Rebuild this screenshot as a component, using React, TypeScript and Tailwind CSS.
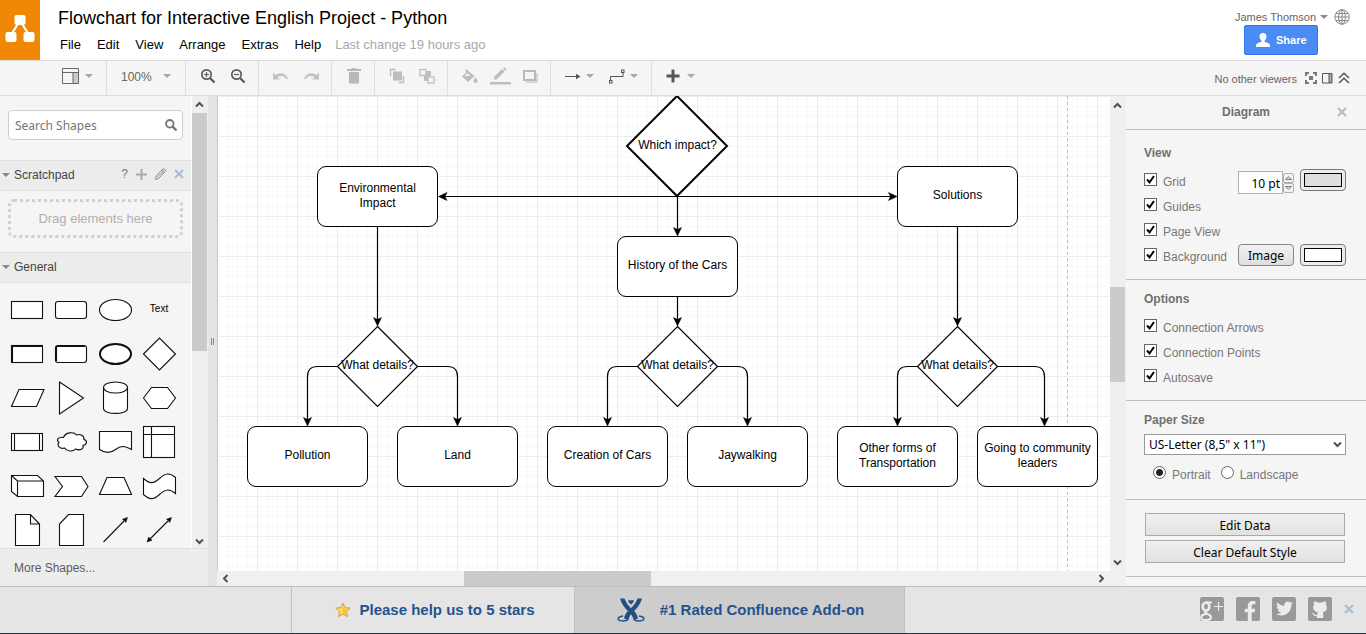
import React, { ReactNode } from "react";
import { FaFacebookF, FaTwitter } from "react-icons/fa";

const ARIAL = "font-['Liberation_Sans',Arial,sans-serif]";
const TAHOMA = "font-['Noto_Sans',Tahoma,sans-serif]";

/* ---------- small shared pieces ---------- */

function Caret({ className = "text-[#a8a8a8]" }: { className?: string }) {
  return (
    <svg width="8" height="4" viewBox="0 0 8 4" className={className} aria-hidden="true">
      <path d="M0 0h8L4 4z" fill="currentColor" />
    </svg>
  );
}

function Cross() {
  return (
    <svg width="10" height="10" viewBox="0 0 10 10" aria-hidden="true">
      <path d="M1 1l8 8M9 1l-8 8" stroke="#a9bcd0" strokeWidth="2" fill="none" />
    </svg>
  );
}

function Chevron({ d }: { d: string }) {
  return (
    <svg width="9" height="9" viewBox="0 0 9 9" aria-hidden="true">
      <path d={d} stroke="#505050" strokeWidth="2" fill="none" />
    </svg>
  );
}

const UP = "M1 6.5l3.5-3.5L8 6.5";
const DOWN = "M1 2.5L4.5 6L8 2.5";
const LEFT = "M6.5 1L3 4.5L6.5 8";
const RIGHT = "M2.5 1L6 4.5L2.5 8";

/* ---------- header ---------- */

function Header() {
  return (
    <header className="flex h-[60px] shrink-0 bg-white">
      <div className="h-[60px] w-10 shrink-0 bg-[#f08705]">
        <svg width="40" height="60" viewBox="0 0 40 60" aria-label="Logo">
          <path d="M19 22L11 35M21 22l8 13" stroke="#fff" strokeWidth="2.2" />
          <rect x="14.5" y="15" width="11" height="10" rx="2" fill="#fff" />
          <rect x="5.5" y="32" width="11" height="10" rx="2" fill="#fff" />
          <rect x="23.5" y="32" width="11" height="10" rx="2" fill="#fff" />
        </svg>
      </div>
      <div className="min-w-0 flex-1 pl-[18px] pt-[7px]">
        <h1 className="text-[18px] leading-[22px] text-black">
          Flowchart for Interactive English Project - Python
        </h1>
        <nav className="mt-2 flex gap-4 pl-0.5 text-[13px] leading-4 text-black">
          {["File", "Edit", "View", "Arrange", "Extras", "Help"].map((m) => (
            <button key={m} type="button">
              {m}
            </button>
          ))}
          <span className="-ml-0.5 text-[#a9a9a9]">Last change 19 hours ago</span>
        </nav>
      </div>
      <div className="flex flex-col pr-4 pt-2">
        <div className="flex items-center">
          <button type="button" className="flex items-center gap-1 pt-px text-[11px] leading-4 text-[#666]">
            James Thomson
            <Caret className="text-[#8a8a8a]" />
          </button>
          <a href="#language" aria-label="Language" className="ml-1.5 block">
            <svg width="16" height="16" viewBox="0 0 16 16" fill="none" stroke="#888" aria-hidden="true">
              <circle cx="8" cy="8" r="7.2" />
              <ellipse cx="8" cy="8" rx="3.4" ry="7.2" />
              <path d="M8 1v14M1 8h14M2 4.5h12M2 11.5h12" />
            </svg>
          </a>
        </div>
        <button
          type="button"
          className="mr-8 flex h-[30px] w-[74px] items-center gap-1.5 self-end rounded-[2px] border border-[#3079ed] bg-[#4a8bf5] pl-[11px] text-[11px] font-bold text-white"
        >
          <svg width="14" height="14" viewBox="0 0 14 14" fill="#fff" aria-hidden="true">
            <path d="M7 0c2.200 0 3.500 1.500 3.500 3.500 0 1.700-.8 3.300-1.900 4v1.200c1.700.7 4.400 1.200 5.100 2.800.3.700.3 2.500.3 2.500H0s0-1.800.3-2.500C1 9.900 3.700 9.400 5.400 8.700V7.500C4.300 6.800 3.500 5.200 3.500 3.500 3.500 1.500 4.800 0 7 0z" />
          </svg>
          Share
        </button>
      </div>
    </header>
  );
}

/* ---------- toolbar ---------- */

function Group({ children, className }: { children: ReactNode; className: string }) {
  return <div className={`flex h-full shrink-0 items-center pb-1 ${className}`}>{children}</div>;
}

function Tool({ label, children }: { label: string; children: ReactNode }) {
  return (
    <button type="button" aria-label={label} className="flex items-center gap-[5px]">
      {children}
    </button>
  );
}

function Zoom({ plus }: { plus?: boolean }) {
  return (
    <svg width="16" height="16" viewBox="0 0 16 16" fill="none" stroke="#5c5c5c" aria-hidden="true">
      <circle cx="6.500" cy="6.500" r="4.700" strokeWidth="1.700" />
      <path d="M10 10l4.500 4.500" strokeWidth="2.300" />
      <path d={plus ? "M4 6.500h5M6.500 4v5" : "M4 6.500h5"} strokeWidth="1.200" />
    </svg>
  );
}

function Toolbar() {
  const sep = "border-r border-[#dedede]";
  return (
    <div className="flex h-[36px] shrink-0 border-y border-t-[#dadada] border-b-[#dcdcdc] bg-[#f5f5f5]">
      <Group className={`w-[107px] pl-[62px] ${sep}`}>
        <Tool label="View panels">
          <svg width="18" height="17" viewBox="0 0 18 17" fill="none" stroke="#666" aria-hidden="true">
            <rect x="11" y="5" width="6" height="11" fill="#ccc" stroke="none" />
            <path d="M.5.500h16v15H.500zM.500 4.500h16M11 4.500v11" />
          </svg>
          <Caret />
        </Tool>
      </Group>
      <Group className={`w-[79px] pl-[14px] ${sep}`}>
        <button type="button" className="flex items-center gap-[11px] text-[12px] leading-4 text-[#666]">
          <span className="pt-0.5">100%</span>
          <Caret />
        </button>
      </Group>
      <Group className={`w-[73px] gap-3.5 pl-[14px] ${sep}`}>
        <Tool label="Zoom in"><Zoom plus /></Tool>
        <Tool label="Zoom out"><Zoom /></Tool>
      </Group>
      <Group className={`w-[73px] gap-3.5 pl-[14px] ${sep}`}>
        <Tool label="Undo">
          <svg width="16" height="10" viewBox="0 0 16 10" fill="#c4c4c4" aria-hidden="true">
            <path d="M0 1.500v7h7L4.600 6.200C7.500 4 11 4.500 13.300 8.200L15 7.500C12.800 2 7 1 2.600 4z" />
          </svg>
        </Tool>
        <Tool label="Redo">
          <svg width="16" height="10" viewBox="0 0 16 10" fill="#c4c4c4" aria-hidden="true">
            <path d="M16 1.500v7H9l2.400-2.300C8.500 4 5 4.500 2.700 8.200L1 7.500C3.200 2 9 1 13.400 4z" />
          </svg>
        </Tool>
      </Group>
      <Group className={`w-[43px] pl-[15px] ${sep}`}>
        <Tool label="Delete">
          <svg width="14" height="16" viewBox="0 0 14 16" fill="#b9b9b9" aria-hidden="true">
            <path d="M0 1h4.500V0h5v1H14v2H0zM2 4h10v11.500H2z" />
          </svg>
        </Tool>
      </Group>
      <Group className={`w-[73px] gap-3.5 pl-[14px] ${sep}`}>
        <Tool label="To front">
          <svg width="16" height="16" viewBox="0 0 16 16" fill="none" stroke="#bdbdbd" aria-hidden="true">
            <path d="M6.500 1.500h-5v6h1M9.500 14.500h5v-6h-1" strokeWidth="1.300" />
            <rect x="4" y="3.500" width="9" height="9" fill="#bdbdbd" stroke="none" />
          </svg>
        </Tool>
        <Tool label="To back">
          <svg width="16" height="16" viewBox="0 0 16 16" fill="none" stroke="#bdbdbd" aria-hidden="true">
            <path d="M7 3h5v5h3v0H9v5H5V8h2z" fill="#bdbdbd" stroke="none" />
            <rect x="1" y="1.500" width="6" height="6" strokeWidth="1.300" />
            <rect x="9" y="9" width="6" height="6" strokeWidth="1.300" fill="#f5f5f5" />
          </svg>
        </Tool>
      </Group>
      <Group className={`w-[103px] gap-3 pl-[13px] ${sep}`}>
        <Tool label="Fill colour">
          <svg width="17" height="15" viewBox="0 0 17 15" fill="#bdbdbd" aria-hidden="true">
            <path d="M5 0l8.500 7-6.500 6L1 7.500 5.500 3 4 1.300z" />
            <path d="M3.500 7L6.500 4.300 9.500 7z" fill="#f5f5f5" />
            <path d="M14.500 8c1 1.800 2 2.800 2 4a2 2 0 01-4 0c0-1.200 1-2.200 2-4z" />
          </svg>
        </Tool>
        <Tool label="Line colour">
          <svg width="21" height="18" viewBox="0 0 21 18" fill="#bdbdbd" aria-hidden="true">
            <path d="M4 12.500V10L12 2l2.500 2.500-8 8zM13 1.200L14.200 0l2.500 2.500L15.500 3.700zM0 15h21v2.500H0z" />
          </svg>
        </Tool>
        <Tool label="Shadow">
          <svg width="15" height="13" viewBox="0 0 15 13" aria-hidden="true">
            <rect x="3" y="3" width="12" height="10" fill="#d6d6d6" />
            <rect x="1" y="1" width="11" height="9" fill="#f5f5f5" stroke="#b9b9b9" strokeWidth="2" />
          </svg>
        </Tool>
      </Group>
      <Group className={`w-[101px] gap-[15px] pl-[14px] ${sep}`}>
        <Tool label="Connection">
          <svg width="16" height="7" viewBox="0 0 16 7" aria-hidden="true">
            <path d="M0 3.500h13" stroke="#555" />
            <path d="M11 .8l4.500 2.700L11 6.200z" fill="#555" />
          </svg>
          <Caret />
        </Tool>
        <Tool label="Waypoints">
          <svg width="16" height="15" viewBox="0 0 16 15" fill="none" stroke="#555" aria-hidden="true">
            <path d="M1.500 11V7.500h12.500V4" />
            <rect x=".5" y="11.500" width="2.500" height="2.500" />
            <rect x="12.500" y="1" width="2.500" height="2.500" />
          </svg>
          <Caret />
        </Tool>
      </Group>
      <Group className="pl-[14px]">
        <Tool label="Insert">
          <svg width="14" height="14" viewBox="0 0 14 14" aria-hidden="true">
            <path d="M7 .5v13M.5 7h13" stroke="#555" strokeWidth="3" />
          </svg>
          <span className="pl-0.5"><Caret /></span>
        </Tool>
      </Group>
      <div className="ml-auto flex items-center gap-[5px] pr-4 text-[11px] text-[#666]">
        <span className="pr-[3px] pt-0.5">No other viewers</span>
        <Tool label="Full screen">
          <svg width="12" height="12" viewBox="0 0 12 12" fill="none" stroke="#777" strokeWidth="2" aria-hidden="true">
            <path d="M1 4V1h3M8 1h3v3M11 8v3H8M4 11H1V8" />
            <rect x="4" y="4" width="4" height="4" fill="#777" stroke="none" />
          </svg>
        </Tool>
        <Tool label="Format panel">
          <svg width="11" height="11" viewBox="0 0 11 11" aria-hidden="true">
            <rect x="7" y="1" width="3" height="9" fill="#aaa" />
            <path d="M.5.500h9.500v9.500H.500zM7 1v9" fill="none" stroke="#555" />
          </svg>
        </Tool>
        <Tool label="Collapse">
          <svg width="12" height="12" viewBox="0 0 12 12" fill="none" stroke="#555" strokeWidth="1.500" aria-hidden="true">
            <path d="M1 6l5-4.800L11 6M1 11l5-4.800L11 11" />
          </svg>
        </Tool>
      </div>
    </div>
  );
}

/* ---------- shapes sidebar ---------- */

const SHAPES: { name: string; art: ReactNode }[] = [
  { name: "Rectangle", art: <rect x="6.500" y="13.500" width="31" height="17" /> },
  { name: "Rounded rectangle", art: <rect x="6.500" y="13.500" width="31" height="17" rx="2.500" /> },
  { name: "Ellipse", art: <ellipse cx="22.500" cy="22" rx="16" ry="10.500" /> },
  { name: "Text", art: null },
  {
    name: "Bold rectangle",
    art: (
      <>
        <rect x="6.500" y="13.500" width="31" height="17" />
        <path d="M7.500 30V14.500H37" />
      </>
    ),
  },
  {
    name: "Bold rounded rectangle",
    art: (
      <>
        <rect x="6.500" y="13.500" width="31" height="17" rx="2.500" />
        <path d="M7.500 29V14.500H36" />
      </>
    ),
  },
  { name: "Bold ellipse", art: <ellipse cx="22.500" cy="22" rx="15.500" ry="10" strokeWidth="2" /> },
  { name: "Diamond", art: <path d="M6.500 22l16-16 16 16-16 16z" /> },
  { name: "Parallelogram", art: <path d="M6.500 30.500l7.500-17h25l-7.500 17z" /> },
  { name: "Triangle", art: <path d="M10.500 6l24 16-24 16z" /> },
  {
    name: "Cylinder",
    art: (
      <>
        <path d="M10.500 11.500v21c0 6.500 24 6.500 24 0v-21" />
        <ellipse cx="22.500" cy="11.500" rx="12" ry="5.500" />
      </>
    ),
  },
  { name: "Hexagon", art: <path d="M6.500 22l8-10.500h16l8 10.500-8 10.500h-16z" /> },
  {
    name: "Process",
    art: (
      <>
        <rect x="6.500" y="13.500" width="31" height="17" />
        <path d="M9.500 13.500v17M34.500 13.500v17" />
      </>
    ),
  },
  {
    name: "Cloud",
    art: (
      <path d="M14.500 17.500c-6-1-7.500 3-4.500 5-3 3 1.500 7 5.500 5.500 2 3.500 8.500 4 11 1 4.500 2 8.500 0 7.500-3.500 4.500-1 4.500-5 1-6 .5-4-4-6-7.500-4.500-2.500-3.500-11-3-13 2.500z" />
    ),
  },
  { name: "Document", art: <path d="M6.500 11.500h32v18c-7-4-11-4-16 0s-10 4-16 0z" /> },
  {
    name: "Internal storage",
    art: (
      <>
        <rect x="6.500" y="6.500" width="31" height="31" />
        <path d="M14.500 6.500v31M6.500 14.500h31" />
      </>
    ),
  },
  {
    name: "Cube",
    art: (
      <path d="M6.500 11.500h26l6 5.500v15.500h-26l-6-5zM6.500 11.500l6 5.500v15.500M12.500 17h26" />
    ),
  },
  { name: "Step", art: <path d="M6 12.500h26.500l6.500 10-6.500 10H6l7.500-10z" /> },
  { name: "Trapezoid", art: <path d="M6.500 30.500l7.500-17h17l7.500 17z" /> },
  {
    name: "Tape",
    art: <path d="M6.500 14.500c6 5.500 10 5.500 16 0s10-6 16-1v16c-6-5-10-4.500-16 1s-10 5.500-16 0z" />,
  },
  { name: "Note", art: <path d="M10.500 6.500h15l9 9.500v21.500h-24zM25.500 6.500V16h9" /> },
  { name: "Card", art: <path d="M19.500 6.500h15v31h-24V16z" /> },
  {
    name: "Arrow",
    art: (
      <>
        <path d="M10.500 34l21-21.500" />
        <path d="M34.500 9.500l-1.800 5-1.200-2-2-1.200z" fill="#000" strokeWidth=".6" />
      </>
    ),
  },
  {
    name: "Two-way arrow",
    art: (
      <>
        <path d="M12.500 31.500l19-19" />
        <path d="M34.500 9.500l-1.800 5-1.200-2-2-1.200zM10 34l1.800-5 1.200 2 2 1.200z" fill="#000" strokeWidth=".6" />
      </>
    ),
  },
];

function SectionHeader({ title, children }: { title: string; children?: ReactNode }) {
  return (
    <div className="flex h-[31px] items-center border-y border-[#e0e0e0] bg-[#ececec] pb-[3px] pl-0.5 pr-[7px]">
      <button type="button" className="flex items-center gap-1 pt-px text-[12px] leading-4 text-[#444]">
        <Caret className="text-[#888]" />
        {title}
      </button>
      <div className="ml-auto flex items-center gap-2">{children}</div>
    </div>
  );
}

function Sidebar() {
  return (
    <aside className="flex w-[208px] shrink-0 flex-col">
      <div className="flex min-h-0 flex-1">
        <div className="w-[192px] overflow-hidden border-r border-white bg-[#f5f5f5]">
          <div className="px-2 pb-5 pt-[14px]">
            <div className="flex h-[30px] w-[175px] items-center rounded-[4px] border border-[#cfcfcf] bg-white pl-1.5 pr-[5px]">
              <input
                type="text"
                aria-label="Search Shapes"
                placeholder="Search Shapes"
                className={`w-0 min-w-0 flex-1 bg-transparent pt-0.5 text-[12px] text-[#333] outline-none placeholder:text-[#757575] ${TAHOMA}`}
              />
              <svg width="12" height="12" viewBox="0 0 12 12" fill="none" stroke="#777" aria-hidden="true">
                <circle cx="4.800" cy="4.800" r="3.800" strokeWidth="1.800" />
                <path d="M7.500 7.500l4 4" strokeWidth="2.400" />
              </svg>
            </div>
          </div>
          <SectionHeader title="Scratchpad">
            <button type="button" aria-label="Help" className="text-[12px] leading-4 text-[#777]">?</button>
            <button type="button" aria-label="Add">
              <svg width="11" height="11" viewBox="0 0 11 11" aria-hidden="true">
                <path d="M5.500 0v11M0 5.500h11" stroke="#aaa" strokeWidth="2" />
              </svg>
            </button>
            <button type="button" aria-label="Edit">
              <svg width="11" height="12" viewBox="0 0 11 12" fill="none" stroke="#8a8a8a" aria-hidden="true">
                <path d="M.5 11.500l.8-3.800L8 1c1-1 3.200 1 2.300 2.200L3.800 10.300zM2.500 9L8.500 3M6.800 2.200l2.500 2.300" />
              </svg>
            </button>
            <button type="button" aria-label="Close scratchpad"><Cross /></button>
          </SectionHeader>
          <div className="px-2 py-2">
            <div className="mb-1.5 flex h-[39px] w-[175px] items-center justify-center rounded-[6px] border-[3px] border-dotted border-[#d0d0d0] text-[13px] text-[#b0b0b0]">
              Drag elements here
            </div>
          </div>
          <SectionHeader title="General" />
          <div className="grid grid-cols-[repeat(4,44px)] pl-[5px] pt-[5px]">
            {SHAPES.map((s) => (
              <button key={s.name} type="button" aria-label={s.name} className="flex h-11 w-11 items-center justify-center">
                {s.art ? (
                  <svg width="44" height="44" viewBox="0 0 44 44" fill="#fff" stroke="#111" strokeWidth="1.100" aria-hidden="true">
                    {s.art}
                  </svg>
                ) : (
                  <span className="pb-0.5 text-[10px] leading-3 text-black">Text</span>
                )}
              </button>
            ))}
          </div>
        </div>
        <div className="flex w-4 flex-col items-center justify-between bg-[#efefef] pr-px">
          <div className="flex h-[17px] items-center"><Chevron d={UP} /></div>
          <div className="mb-auto h-[238px] w-full bg-[#cbcbcb]" />
          <div className="flex h-[13px] items-center"><Chevron d={DOWN} /></div>
        </div>
      </div>
      <div className="flex h-[38px] shrink-0 items-center border-t border-[#dedede] bg-[#ededed] pl-[14px]">
        <button type="button" className="text-[12px] text-[#5c5c5c]">More Shapes...</button>
      </div>
    </aside>
  );
}

/* ---------- diagram canvas ---------- */

const BOXES = [
  { x: 99, y: 70, text: "Environmental\nImpact" },
  { x: 399, y: 140, text: "History of the Cars" },
  { x: 679, y: 70, text: "Solutions" },
  { x: 29, y: 330, text: "Pollution" },
  { x: 179, y: 330, text: "Land" },
  { x: 329, y: 330, text: "Creation of Cars" },
  { x: 469, y: 330, text: "Jaywalking" },
  { x: 619, y: 330, text: "Other forms of\nTransportation" },
  { x: 759, y: 330, text: "Going to community\nleaders" },
];

const DECISIONS = [
  { x: 459, y: 50, r: 50, w: 2, text: "Which impact?" },
  { x: 159.5, y: 270.5, r: 40, w: 1.2, text: "What details?" },
  { x: 459.5, y: 270.5, r: 40, w: 1.2, text: "What details?" },
  { x: 739.5, y: 270.5, r: 40, w: 1.2, text: "What details?" },
];

const LINKS = [
  "M459.500 100V135",
  "M459.500 201V225",
  "M159.500 131V225",
  "M739.500 131V225",
  "M226 100.500H673",
  "M119.500 270.500H99.500Q89.500 270.500 89.500 280.500V325",
  "M199.500 270.500H229.500Q239.500 270.500 239.500 280.500V325",
  "M419.500 270.500H399.500Q389.500 270.500 389.500 280.500V325",
  "M499.500 270.500H519.500Q529.500 270.500 529.500 280.500V325",
  "M699.500 270.500H689.500Q679.500 270.500 679.500 280.500V325",
  "M779.500 270.500H816.500Q826.500 270.500 826.500 280.500V325",
];

const HEADS_DOWN = [
  [459.5, 140], [459.5, 230], [159.5, 230], [739.5, 230],
  [89.5, 330], [239.5, 330], [389.5, 330], [529.5, 330], [679.5, 330], [826.5, 330],
];

function Canvas() {
  return (
    <main className="flex min-w-0 flex-1 flex-col">
      <div className="flex min-h-0 flex-1">
        <div className="relative min-w-0 flex-1 overflow-hidden border-l border-[#c8c8c8] bg-white">
          <svg width="100%" height="100%" className="absolute inset-0" fill="none" stroke="#000" strokeWidth="1.200" aria-hidden="true">
            <defs>
              <pattern id="grid" x="-1" y="0" width="40" height="40" patternUnits="userSpaceOnUse">
                <path
                  d="M10.500 0v40M20.500 0v40M30.500 0v40M0 10.500h40M0 20.500h40M0 30.500h40"
                  stroke="#f8f8f8"
                  strokeWidth="1"
                />
                <path d="M.5 0v40M0 .5h40" stroke="#ededed" strokeWidth="1" />
              </pattern>
            </defs>
            <rect width="100%" height="100%" fill="url(#grid)" stroke="none" />
            <path d="M849.500 0V2000" stroke="#c2c2c2" strokeWidth="1" strokeDasharray="3 3" />
            {LINKS.map((d) => (
              <path key={d} d={d} />
            ))}
            {HEADS_DOWN.map(([x, y]) => (
              <path key={`${x}-${y}`} d={`M${x} ${y}l-4-8.500 4 2 4-2z`} fill="#000" strokeWidth=".5" />
            ))}
            <path d="M679 100.500l-8.500-4 2 4-2 4zM220.500 100.500l8.500-4-2 4 2 4z" fill="#000" strokeWidth=".5" />
            {DECISIONS.map((d) => (
              <path
                key={d.x + d.y}
                d={`M${d.x} ${d.y - d.r}l${d.r} ${d.r}-${d.r} ${d.r}-${d.r}-${d.r}z`}
                fill="#fff"
                strokeWidth={d.w}
              />
            ))}
          </svg>
          {BOXES.map((b) => (
            <div
              key={b.text}
              className="absolute flex h-[61px] w-[121px] items-center justify-center whitespace-pre rounded-[9px] border border-black bg-white pb-0.5 text-center text-[12px] leading-[15px] text-black"
              style={{ left: b.x, top: b.y }}
            >
              {b.text}
            </div>
          ))}
          {DECISIONS.map((d) => (
            <div
              key={d.x + d.y}
              className="absolute -mt-[10px] -ml-[50px] w-[101px] whitespace-nowrap text-center text-[12px] leading-4 text-black"
              style={{ left: Math.floor(d.x), top: Math.floor(d.y) + 1 }}
            >
              {d.text}
            </div>
          ))}
        </div>
        <div className="flex w-4 shrink-0 flex-col items-center bg-[#efefef] pr-px">
          <div className="flex h-[18px] items-center"><Chevron d={UP} /></div>
          <div className="mt-[173px] h-[95px] w-full bg-[#cbcbcb]" />
          <div className="mt-auto flex h-[18px] items-center"><Chevron d={DOWN} /></div>
        </div>
      </div>
      <div className="flex h-[15px] shrink-0 items-center bg-[#f0f0f0] pr-4">
        <div className="flex w-4 justify-center"><Chevron d={LEFT} /></div>
        <div className="ml-[231px] h-full w-[187px] bg-[#cbcbcb]" />
        <div className="ml-auto flex w-[18px] justify-center"><Chevron d={RIGHT} /></div>
      </div>
    </main>
  );
}

/* ---------- format panel ---------- */

function Check({ label }: { label: string }) {
  return (
    <label className="flex h-[25px] items-start gap-1.5 pt-[5px] text-[12px] leading-4 text-[#777]">
      <span className="grid h-[13px] w-[13px] place-items-center *:[grid-area:1/1]">
        <input type="checkbox" defaultChecked className="peer h-[13px] w-[13px] appearance-none border border-[#666] bg-white" />
        <svg width="9" height="9" viewBox="0 0 9 9" className="pointer-events-none hidden peer-checked:block" aria-hidden="true">
          <path d="M1 4.500l2.500 2.800L8 1" stroke="#000" strokeWidth="2" fill="none" />
        </svg>
      </span>
      <span className="pt-px">{label}</span>
    </label>
  );
}

function Swatch({ label, gray }: { label: string; gray?: boolean }) {
  return (
    <button
      type="button"
      aria-label={label}
      className="h-[22px] w-[46px] rounded-[4px] border border-[#777] bg-[#ececec] p-[3px]"
    >
      <span className={`block h-full border border-black ${gray ? "bg-[#dedede]" : "bg-white"}`} />
    </button>
  );
}

function Stepper({ label, down }: { label: string; down?: boolean }) {
  return (
    <button
      type="button"
      aria-label={label}
      className="flex h-[10px] w-[11px] items-center justify-center rounded-[2px] border border-[#b0b0b0] bg-[#f3f3f3]"
    >
      <svg width="7" height="4" viewBox="0 0 7 4" aria-hidden="true">
        <path d={down ? "M.5.500h6L3.500 3.500z" : "M.5 3.500h6L3.500.500z"} fill="#ddd" stroke="#666" strokeWidth=".8" />
      </svg>
    </button>
  );
}

function FormatPanel() {
  const section = "border-b border-[#bfbfbf]";
  const inset = "pl-[18px] pr-5";
  const heading = "text-[12px] font-bold leading-4 text-[#707070]";
  const wide = `block h-[23px] w-full border border-[#aaa] bg-linear-to-b from-[#f0f0f0] to-[#e2e2e2] pt-0.5 text-[12px] leading-4 text-black ${TAHOMA}`;
  return (
    <aside className="w-[240px] shrink-0 overflow-hidden bg-[#f5f5f5]">
      <div className="grid h-[34px] grid-cols-[1fr_auto_1fr] items-center border-b border-[#bfbfbf] px-[19px] pb-0.5">
        <h2 className="col-start-2 text-[12px] font-bold leading-4 text-[#707070]">Diagram</h2>
        <button type="button" aria-label="Close panel" className="justify-self-end"><Cross /></button>
      </div>

      <section className={`${section} ${inset} pb-[11px] pt-[15px]`}>
        <h3 className={heading}>View</h3>
        <div className="mt-[7px] flex justify-between">
          <div>
            <Check label="Grid" />
            <Check label="Guides" />
            <Check label="Page View" />
            <Check label="Background" />
          </div>
          <div className="flex w-[108px] flex-col justify-between pb-0.5 pt-px">
            <div className="flex">
              <input
                type="text"
                aria-label="Grid size"
                defaultValue="10 pt"
                className={`mt-0.5 h-[23px] w-[45px] border border-[#b0b0b0] bg-white pr-0.5 pt-0.5 text-right text-[12px] text-black ${TAHOMA}`}
              />
              <div className="mt-1 flex flex-col">
                <Stepper label="Increase grid size" />
                <Stepper label="Decrease grid size" down />
              </div>
              <span className="ml-auto"><Swatch label="Grid colour" gray /></span>
            </div>
            <div className="flex justify-between">
              <button
                type="button"
                className={`h-[22px] w-14 rounded-[4px] border border-[#888] bg-linear-to-b from-[#f2f2f2] to-[#dedede] pt-px text-[12px] leading-4 text-black ${TAHOMA}`}
              >
                Image
              </button>
              <Swatch label="Background colour" />
            </div>
          </div>
        </div>
      </section>

      <section className={`${section} ${inset} pb-[11px] pt-[11px]`}>
        <h3 className={heading}>Options</h3>
        <div className="mt-[7px]">
          <Check label="Connection Arrows" />
          <Check label="Connection Points" />
          <Check label="Autosave" />
        </div>
      </section>

      <section className={`${section} ${inset} h-[99px] pt-[11px]`}>
        <h3 className={heading}>
          <label htmlFor="paper">Paper Size</label>
        </h3>
        <div className="mt-1.5 grid items-center *:[grid-area:1/1]">
          <select
            id="paper"
            className={`h-[21px] w-full appearance-none border border-[#999] bg-white pl-1 text-[12px] leading-[18px] text-black ${TAHOMA}`}
          >
            <option>US-Letter (8,5" x 11")</option>
          </select>
          <span className="pointer-events-none justify-self-end pr-1"><Chevron d={DOWN} /></span>
        </div>
        <div className="mt-[11px] flex gap-2.5 pl-[9px] text-[12px] leading-4 text-[#777]">
          {["Portrait", "Landscape"].map((o, i) => (
            <label key={o} className="flex items-start gap-1.5">
              <input
                type="radio"
                name="orientation"
                defaultChecked={i === 0}
                className="h-[13px] w-[13px] appearance-none rounded-full border border-[#666] bg-white checked:bg-[radial-gradient(circle,#222_0_3px,transparent_4px)]"
              />
              <span className="pt-px">{o}</span>
            </label>
          ))}
        </div>
      </section>

      <section className={`${section} flex h-[77px] flex-col gap-1 pl-[19px] pr-[21px] pt-[13px]`}>
        <button type="button" className={wide}>Edit Data</button>
        <button type="button" className={wide}>Clear Default Style</button>
      </section>
    </aside>
  );
}

/* ---------- footer ---------- */

function SocialLink({ name, children }: { name: string; children: ReactNode }) {
  return (
    <a
      href={`#${name}`}
      aria-label={name}
      className="flex h-6 w-6 items-center justify-center overflow-hidden rounded-[2px] bg-[#999] text-[#ececec]"
    >
      {children}
    </a>
  );
}

function Footer() {
  return (
    <footer className="flex h-12 shrink-0 border-b border-t border-b-[#26353f] border-t-[#bdbdbd] bg-[#e5e5e5] text-[15px] font-bold text-[#25528c]">
      <div className="w-[292px] border-r border-[#c0c0c0]" />
      <a href="#rate" className="flex w-[283px] items-center justify-center gap-2 border-r border-[#c0c0c0] pl-1">
        <svg width="16" height="16" viewBox="0 0 16 16" aria-hidden="true">
          <path
            d="M8 1l2.100 4.600 5 .6-3.700 3.400 1 5L8 12.100l-4.400 2.500 1-5L.9 6.200l5-.6z"
            fill="#fbd95a"
            stroke="#d0a050"
            strokeLinejoin="round"
          />
          <path d="M8 3.800l1.300 3 3.100.4-2.300 2.100.6 3L8 10.700z" fill="#f7c325" />
        </svg>
        <span>Please help us to 5 stars</span>
      </a>
      <a href="#addon" className="flex w-[330px] items-center justify-center gap-[15px] border-r border-[#c0c0c0] bg-[#cdcdcd] pl-0.5">
        <svg width="28" height="24" viewBox="0 0 28 24" fill="#205081" aria-hidden="true">
          <path d="M3 .5h4.500c1.500 4 4 7.500 7.500 10.500 3.500 3 5.500 6 6 9.500l-4.500 1.500c-.5-3.500-2-5.500-4.500-8C8 10.500 4.500 6 3 .500z" />
          <path d="M25 .5h-4.500c-1.500 4-4 7.500-7.500 10.500-3.500 3-5.500 6-6 9.500l4.500 1.500c.5-3.500 2-5.500 4.500-8C20 10.500 23.500 6 25 .500z" />
          <path d="M14 6.500L11.500 4c-.8-2 1.700-2.600 2.500-1.200.8-1.400 3.300-.8 2.500 1.200z" />
          <path
            d="M6 18c-7 1-6 5 .5 5 2 0 3.500-.5 4.500-1.300M22 18c7 1 6 5-.5 5-2 0-3.500-.5-4.500-1.300"
            fill="none"
            stroke="#205081"
            strokeWidth="1.500"
          />
        </svg>
        <span>#1 Rated Confluence Add-on</span>
      </a>
      <div className="ml-auto flex items-center gap-3 pb-[3px] pr-3">
        <SocialLink name="google-plus">
          <svg width="24" height="24" viewBox="0 0 24 24" fill="none" stroke="#ececec" aria-hidden="true">
            <ellipse cx="6" cy="9.500" rx="3.300" ry="4" strokeWidth="2.600" />
            <path d="M6 5.500h6M7 13.500c-2 1-2.500 2-.5 3 3.500 1.500 5 2.500 4.500 4.300-.8 3-9.500 3.200-9.800-.2C1 18 4 17 7 17" strokeWidth="2.200" />
            <path d="M18.500 5v9M14 9.500h9" strokeWidth="1.200" />
          </svg>
        </SocialLink>
        <SocialLink name="facebook"><span className="pl-1 pt-1"><FaFacebookF size={20} /></span></SocialLink>
        <SocialLink name="twitter"><FaTwitter size={17} /></SocialLink>
        <SocialLink name="github">
          <svg width="24" height="24" viewBox="0 0 24 24" fill="#ececec" aria-hidden="true">
            <path d="M6 4.500c1.300-.2 2.700.4 3.800 1.100 1.300-.3 2.900-.3 4.200 0 1.100-.7 2.500-1.300 3.800-1.100.5 1.200.5 2.300.2 3.400 2 3 .6 6.700-3.300 7.300.5.900.6 1.800.6 3.300V21H9v-1.800c-2.500.4-3.300-.7-4-2-.4-.6-.8-1-1.200-1.300 2-.4 2.500 1.800 3.800 2 .8.100 1.200 0 1.600-.3.100-1 .4-1.800.8-2.400-4.300-.6-5.900-4.300-4-7.300-.3-1.100-.4-2.200 0-3.400z" />
          </svg>
        </SocialLink>
        <button type="button" aria-label="Close banner"><Cross /></button>
      </div>
    </footer>
  );
}

export default function App() {
  return (
    <div className={`flex h-screen flex-col overflow-hidden bg-[#f5f5f5] ${ARIAL}`}>
      <Header />
      <Toolbar />
      <div className="flex min-h-0 flex-1">
        <Sidebar />
        <div className="flex w-[9px] shrink-0 items-center justify-center gap-px bg-[#e4e4e4]">
          <span className="h-[7px] w-px bg-[#888]" />
          <span className="h-[7px] w-px bg-[#888]" />
        </div>
        <Canvas />
        <FormatPanel />
      </div>
      <Footer />
    </div>
  );
}
